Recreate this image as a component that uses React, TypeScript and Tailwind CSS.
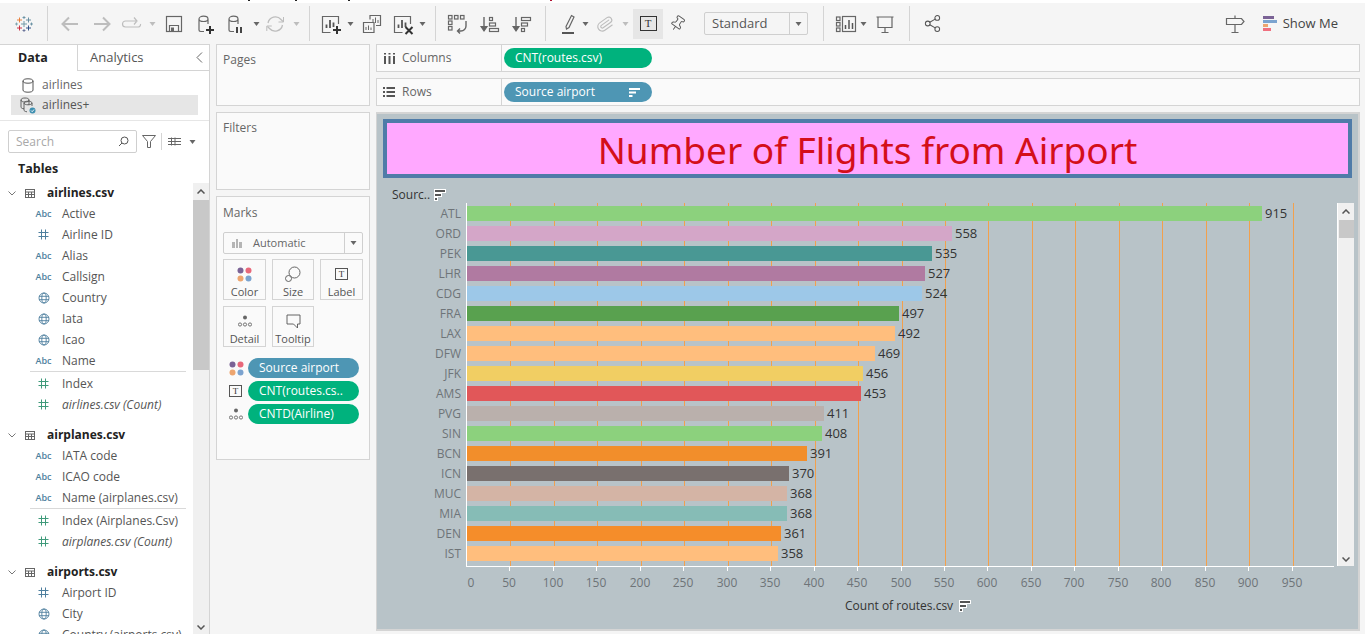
import type { ReactNode } from 'react';
import { Paperclip, Pin, Share2 } from 'lucide-react';

const gray = '#666666';
const faded = '#bdbdbd';

const flights = [
  { code: 'ATL', value: 915, color: '#8cd17d' },
  { code: 'ORD', value: 558, color: '#d4a6c8' },
  { code: 'PEK', value: 535, color: '#499894' },
  { code: 'LHR', value: 527, color: '#b07aa1' },
  { code: 'CDG', value: 524, color: '#9dc8e8' },
  { code: 'FRA', value: 497, color: '#59a14f' },
  { code: 'LAX', value: 492, color: '#ffbe7d' },
  { code: 'DFW', value: 469, color: '#ffbe7d' },
  { code: 'JFK', value: 456, color: '#f1ce63' },
  { code: 'AMS', value: 453, color: '#e15759' },
  { code: 'PVG', value: 411, color: '#bab0ac' },
  { code: 'SIN', value: 408, color: '#8cd17d' },
  { code: 'BCN', value: 391, color: '#f28e2b' },
  { code: 'ICN', value: 370, color: '#79706e' },
  { code: 'MUC', value: 368, color: '#d4b4a5' },
  { code: 'MIA', value: 368, color: '#86bcb6' },
  { code: 'DEN', value: 361, color: '#f58d2a' },
  { code: 'IST', value: 358, color: '#ffbe7d' },
];

const ticks = Array.from({ length: 20 }, (_, i) => i * 50);
const scale = 0.869;

function Icon({ children }: { children: ReactNode }) {
  return (
    <svg width="24" height="24" viewBox="0 0 24 24" fill="none" stroke={gray} strokeWidth="1.2" className="shrink-0">
      {children}
    </svg>
  );
}

function Caret({ className = '', color = '#666666' }: { className?: string; color?: string }) {
  return (
    <svg width="7" height="4" viewBox="0 0 7 4" className={`shrink-0 ${className}`}>
      <path d="M0.5 0H6.5L3.5 4Z" fill={color} />
    </svg>
  );
}

function Sep({ className = '' }: { className?: string }) {
  return <div className={`w-px h-[35px] bg-[#d4d4d4] shrink-0 ${className}`} />;
}

function Logo() {
  const cross = (x: number, y: number, r: number, c: string, w = 1) => (
    <path d={`M${x - r} ${y}H${x + r}M${x} ${y - r}V${y + r}`} stroke={c} strokeWidth={w} />
  );
  return (
    <svg width="24" height="24" viewBox="0 0 24 24" fill="none" className="shrink-0">
      {cross(12, 12, 3, '#7099a6', 1)}
      {cross(7.500, 8, 2.500, '#e8762b', 0.9)}
      {cross(16.500, 8, 2.500, '#5b879b', 0.9)}
      {cross(7.500, 16, 2.500, '#c72035', 0.9)}
      {cross(16.500, 16, 2.500, '#1f447e', 0.9)}
      {cross(12, 5.500, 1.500, '#59879b', 0.8)}
      {cross(12, 18.500, 1.500, '#5b6591', 0.8)}
      {cross(4.500, 12, 1.500, '#7099a6', 0.8)}
      {cross(19.500, 12, 1.500, '#59879b', 0.8)}
    </svg>
  );
}

function Cylinder() {
  return <path d="M6 7c0-1.800 2.200-2.800 4.500-2.800S15 5.200 15 7v5M6 7c0 1.600 2.200 2.500 4.500 2.500S15 8.600 15 7M6 7v11c0 .8.8 1.400 1.600 1.500H11" />;
}

function BarsBox() {
  return (
    <>
      <path d="M11.500 20.500H3.500V4.500H19.500V12" />
      <path d="M7.500 16V12.500M11 16V8M14.500 15V10.500" strokeWidth="1.800" stroke="#555" />
    </>
  );
}

function SortIcon({ dark }: { dark?: boolean }) {
  return (
    <Icon>
      <path d="M6 5V18" strokeWidth="1.400" />
      <path d="M3 14.500L6 19L9 14.500Z" fill={gray} />
      {dark ? (
        <>
          <rect x="11.500" y="5.500" width="9" height="3" />
          <rect x="11.500" y="11" width="6" height="3" />
          <rect x="11.500" y="16.500" width="3" height="3" />
        </>
      ) : (
        <>
          <rect x="11.500" y="5.500" width="3" height="3" />
          <rect x="11.500" y="11" width="6" height="3" />
          <rect x="11.500" y="16.500" width="9" height="3" />
        </>
      )}
    </Icon>
  );
}

function Toolbar() {
  return (
    <div className="flex items-center h-[41px] pl-3 pr-[27px] bg-[#f5f5f5]">
      <Logo />
      <Sep className="ml-[11px]" />
      <div className="ml-[10px] shrink-0">
        <svg width="24" height="24" viewBox="0 0 24 24" fill="none" stroke={faded} strokeWidth="2">
          <path d="M4.500 12H20M11 5.500L4.500 12l6.500 6.500" />
        </svg>
      </div>
      <div className="ml-[8px] shrink-0">
        <svg width="24" height="24" viewBox="0 0 24 24" fill="none" stroke={faded} strokeWidth="2">
          <path d="M4 12H19.500M13 5.500L19.500 12 13 18.500" />
        </svg>
      </div>
      <div className="ml-[5px] shrink-0">
        <svg width="24" height="24" viewBox="0 0 24 24" fill="none" stroke={faded} strokeWidth="1.200">
          <path d="M17 9H6.500a3 3 0 0 0 0 6H19.500a2.500 2.500 0 0 0 2-3M15 5.500L18 9 15 12.500" />
        </svg>
      </div>
      <Caret className="ml-[6px]" color={faded} />
      <div className="ml-[6px] shrink-0">
        <Icon>
          <rect x="4.500" y="4.500" width="15" height="15" />
          <path d="M7.500 19.500V13.500H16.500V19.500" />
          <rect x="9" y="15.500" width="3" height="4" fill={gray} stroke="none" />
        </Icon>
      </div>
      <div className="ml-[7px] shrink-0">
        <Icon>
          <Cylinder />
          <path d="M13 18H21M17 14V22" stroke="#333" strokeWidth="2" />
        </Icon>
      </div>
      <div className="ml-[6px] shrink-0">
        <Icon>
          <Cylinder />
          <path d="M14 15V21M18 15V21" stroke="#444" strokeWidth="2" />
        </Icon>
      </div>
      <Caret className="ml-[6px]" />
      <div className="ml-[3px] shrink-0">
        <svg width="24" height="24" viewBox="0 0 24 24" fill="none" stroke={faded} strokeWidth="1.300">
          <path d="M5 11a7.500 7.500 0 0 1 13-3.500l2 2M19.500 13a7.500 7.500 0 0 1-13 3.500l-2-2" />
          <path d="M20.500 5v5h-5M3.800 19v-5h5" strokeWidth="1" />
        </svg>
      </div>
      <Caret className="ml-[6px]" color={faded} />
      <Sep className="ml-[9px]" />
      <div className="ml-[9px] shrink-0">
        <Icon>
          <BarsBox />
          <path d="M14 18H22M18 14V22" stroke="#333" strokeWidth="2" />
        </Icon>
      </div>
      <Caret className="ml-[4px]" />
      <div className="ml-[6px] shrink-0">
        <Icon>
          <path d="M10 7.500V3.500H20.500V13.500H16" />
          <path d="M13 11V7M15.500 11V5.500M18 11V8" strokeWidth="1" />
          <path d="M3.500 10.500H14V20.500H3.500Z" />
          <path d="M6 18V15M8.500 18V13.500M11 18V15.500" strokeWidth="1" />
        </Icon>
      </div>
      <div className="ml-[7px] shrink-0">
        <Icon>
          <BarsBox />
          <path d="M14.500 15L21.500 22M21.500 15L14.500 22" stroke="#333" strokeWidth="2" />
        </Icon>
      </div>
      <Caret className="ml-[4px]" />
      <Sep className="ml-[9px]" />
      <div className="ml-[9px] shrink-0">
        <Icon>
          <rect x="3.500" y="3.500" width="3.500" height="3.500" />
          <rect x="3.500" y="9" width="3.500" height="3.500" />
          <rect x="3.500" y="14.500" width="3.500" height="3.500" />
          <rect x="9.500" y="3.500" width="3.500" height="3.500" />
          <rect x="15.500" y="3.500" width="3.500" height="3.500" />
          <path d="M21 9V14a5 5 0 0 1-5 5h-3M15 16.500L12.500 19l2.500 2.500" strokeWidth="1.400" />
        </Icon>
      </div>
      <div className="ml-[9px] shrink-0">
        <SortIcon />
      </div>
      <div className="ml-[8px] shrink-0">
        <SortIcon dark />
      </div>
      <Sep className="ml-[11px]" />
      <div className="ml-[10px] shrink-0">
        <Icon>
          <path d="M10 14.500L15.500 3.500L18 5L13 15.500L10.500 17Z" />
          <path d="M6 21H18" stroke="#555" strokeWidth="2" />
        </Icon>
      </div>
      <Caret className="ml-[2px]" />
      <div className="ml-[4px] shrink-0">
        <Paperclip size={18} color={faded} strokeWidth={1.500} className="mx-[3px] rotate-[10deg]" />
      </div>
      <Caret className="ml-[5px]" color={faded} />
      <div className="ml-[4px] w-[30px] h-[30px] bg-[#e6e6e6] flex items-center justify-center shrink-0">
        <div className="w-[17px] h-[15px] border border-[#333] flex items-center justify-center text-[11px] leading-none text-[#333] font-['Liberation_Serif',serif]">
          T
        </div>
      </div>
      <div className="ml-[2px] w-[24px] flex justify-center shrink-0">
        <Pin size={17} color="#555" strokeWidth={1.300} className="rotate-[35deg]" />
      </div>
      <div className="ml-[15px] w-[104px] h-[23px] border border-[#cfcfcf] rounded-[2px] flex items-center shrink-0">
        <div className="flex-1 pl-[7px] text-[13px] text-[#555]">Standard</div>
        <div className="w-[18px] h-full border-l border-[#cfcfcf] flex items-center justify-center">
          <Caret />
        </div>
      </div>
      <Sep className="ml-[15px]" />
      <div className="ml-[10px] shrink-0">
        <Icon>
          <rect x="2.500" y="5" width="3.500" height="3.500" />
          <rect x="2.500" y="10.500" width="3.500" height="3.500" />
          <rect x="2.500" y="16" width="3.500" height="3.500" />
          <rect x="8.500" y="4.500" width="13" height="15" />
          <path d="M11.500 17V13M15 17V8M18.500 17V11" stroke="#555" strokeWidth="1.500" />
        </Icon>
      </div>
      <Caret className="ml-[2px]" />
      <div className="ml-[6px] shrink-0">
        <Icon>
          <path d="M3.500 5H20.500M5 5V15.500H19V5M12 15.500V20M8.500 20.500H15.500" />
        </Icon>
      </div>
      <Sep className="ml-[12px]" />
      <div className="ml-[10px] w-[24px] flex justify-center shrink-0">
        <Share2 size={19} color="#555" strokeWidth={1.300} />
      </div>
      <div className="ml-auto shrink-0">
        <Icon>
          <path d="M12 3.500V6.500M3.500 6.500H18.500L21 9.500L18.500 12.500H3.500ZM12 12.500V20.500M8.500 20.500H15.500" />
        </Icon>
      </div>
      <div className="ml-[16px] w-[14px] flex flex-col gap-px shrink-0">
        <div className="h-[3px] w-[11px] bg-[#7b6396]" />
        <div className="h-[3px] w-[14px] bg-[#7ba3cf]" />
        <div className="h-[3px] w-[5px] bg-[#eda56f]" />
        <div className="h-[3px] w-[8px] bg-[#f0707f]" />
      </div>
      <div className="ml-[6px] text-[13px] text-[#444]">Show Me</div>
    </div>
  );
}

function Globe() {
  return (
    <svg width="12" height="12" viewBox="0 0 12 12" fill="none" stroke="#4e7f9e" strokeWidth="0.900">
      <circle cx="6" cy="6" r="5" />
      <ellipse cx="6" cy="6" rx="2.200" ry="5" />
      <path d="M1 4.300H11M1 7.700H11" />
    </svg>
  );
}

function Hash({ color }: { color: string }) {
  return (
    <svg width="11" height="11" viewBox="0 0 11 11" fill="none" stroke={color} strokeWidth="1">
      <path d="M3.500 0.500V10.500M7.500 0.500V10.500M0.500 3.500H10.500M0.500 7.500H10.500" />
    </svg>
  );
}

function Field({ type, name, italic }: { type: 'abc' | 'dim' | 'geo' | 'mea'; name: string; italic?: boolean }) {
  return (
    <div className="flex items-center h-[21px] whitespace-nowrap">
      <div className="w-[27px] ml-[30px] flex justify-center shrink-0">
        {type === 'abc' && <span className="text-[9px] font-semibold text-[#4e7f9e]">Abc</span>}
        {type === 'dim' && <Hash color="#4e7f9e" />}
        {type === 'geo' && <Globe />}
        {type === 'mea' && <Hash color="#3f9a7a" />}
      </div>
      <span className={`ml-[5px] text-[12px] text-[#555] ${italic ? 'italic' : ''}`}>{name}</span>
    </div>
  );
}

function TableHead({ name }: { name: string }) {
  return (
    <div className="flex items-center h-[20px]">
      <svg width="8" height="5" viewBox="0 0 8 5" fill="none" stroke="#777" strokeWidth="1" className="ml-2">
        <path d="M0.500 0.500L4 4L7.500 0.500" />
      </svg>
      <svg width="11" height="9" viewBox="0 0 11 9" fill="none" stroke="#666" strokeWidth="1" className="ml-[9px]">
        <rect x="0.500" y="0.500" width="9" height="8" />
        <path d="M0.500 3H9.500M0.500 5.500H9.500M3.500 3V8.500M6.500 3V8.500" />
      </svg>
      <span className="ml-[11px] text-[12px] font-bold text-[#222]">{name}</span>
    </div>
  );
}

function FieldSep() {
  return <div className="h-[2px] ml-[30px] w-[156px] border-t border-[#d9d9d9]" />;
}

function DataPanel() {
  return (
    <div className="w-[210px] shrink-0 bg-white border-r border-t border-[#d4d4d4] flex flex-col overflow-hidden">
      <div className="flex h-[26px] shrink-0">
        <div className="w-[78px] pl-[18px] flex items-center font-bold text-[12.500px] text-[#222] border-r border-[#d4d4d4]">Data</div>
        <div className="flex-1 pl-[12px] flex items-center justify-between pr-[6px] text-[#555] border-b border-[#d4d4d4] text-[13px]">
          Analytics
          <svg width="7" height="11" viewBox="0 0 7 11" fill="none" stroke="#666" strokeWidth="1">
            <path d="M6 0.500L1 5.500L6 10.500" />
          </svg>
        </div>
      </div>
      <div className="h-[50px] shrink-0 border-b border-[#e6e6e6] pt-[4px] px-[11px] text-[12px] text-[#666]">
        <div className="flex items-center h-[20px]">
          <svg width="12" height="15" viewBox="0 0 12 15" fill="none" stroke="#555" strokeWidth="1" className="ml-[11px]">
            <path d="M1 3c0-1.500 2-2.200 5-2.200S11 1.500 11 3V12c0 1.500-2 2.200-5 2.200S1 13.500 1 12ZM1 3c0 1.500 2 2.200 5 2.200S11 4.500 11 3" />
          </svg>
          <span className="ml-[8px]">airlines</span>
        </div>
        <div className="flex items-center h-[20px] bg-[#e6e6e6] w-[187px]">
          <svg width="16" height="17" viewBox="0 0 16 17" fill="none" stroke="#555" strokeWidth="0.900" className="ml-[9px] shrink-0">
            <path d="M1 3c0-1.500 2-2 4-2s4 .5 4 2v5M1 3c0 1.500 2 2 4 2s4-.5 4-2M1 3V10c0 1 1 1.600 3 1.800" />
            <path d="M4 6c0-1.200 2-1.800 4-1.800s4 .6 4 1.800v3M4 6c0 1.200 2 1.800 4 1.800s4-.6 4-1.800M4 6v7c0 1 1 1.500 3 1.800" />
            <circle cx="12.500" cy="13.500" r="3" fill="#3e8fb0" stroke="none" />
            <path d="M11 13.500L12.200 14.700L14 12.500" stroke="#fff" strokeWidth="0.900" />
          </svg>
          <span className="ml-[6px] text-[#555]">airlines+</span>
        </div>
      </div>
      <div className="flex items-center h-[23px] mt-[9px] ml-[8px] shrink-0">
        <div className="w-[129px] h-[23px] border border-[#cfcfcf] rounded-[2px] flex items-center justify-between px-[7px] text-[12px] text-[#a8a8a8]">
          Search
          <svg width="11" height="11" viewBox="0 0 11 11" fill="none" stroke="#555" strokeWidth="1">
            <circle cx="6.500" cy="4.500" r="3.500" />
            <path d="M4 7L1 10" />
          </svg>
        </div>
        <svg width="14" height="13" viewBox="0 0 14 13" fill="none" stroke="#666" strokeWidth="1" className="ml-[5px]">
          <path d="M0.500 0.500H13.500L8.500 6.500V12.500H5.500V6.500Z" />
        </svg>
        <div className="w-px h-[17px] bg-[#d4d4d4] ml-[5px]" />
        <svg width="13" height="9" viewBox="0 0 13 9" fill="none" stroke="#666" strokeWidth="1" className="ml-[6px]">
          <path d="M0 1.500H13M0 4.500H13M0 7.500H13M3.500 0.500V8.500M7 0.500V8.500" />
        </svg>
        <Caret className="ml-[8px]" />
      </div>
      <div className="h-[30px] pl-[18px] pt-[3px] flex items-center text-[12.500px] font-bold text-[#222] shrink-0">Tables</div>
      <div className="flex flex-1 min-h-0">
        <div className="flex-1 overflow-hidden">
          <TableHead name="airlines.csv" />
          <Field type="abc" name="Active" />
          <Field type="dim" name="Airline ID" />
          <Field type="abc" name="Alias" />
          <Field type="abc" name="Callsign" />
          <Field type="geo" name="Country" />
          <Field type="geo" name="Iata" />
          <Field type="geo" name="Icao" />
          <Field type="abc" name="Name" />
          <FieldSep />
          <Field type="mea" name="Index" />
          <Field type="mea" name="airlines.csv (Count)" italic />
          <div className="h-[10px]" />
          <TableHead name="airplanes.csv" />
          <Field type="abc" name="IATA code" />
          <Field type="abc" name="ICAO code" />
          <Field type="abc" name="Name (airplanes.csv)" />
          <FieldSep />
          <Field type="mea" name="Index (Airplanes.Csv)" />
          <Field type="mea" name="airplanes.csv (Count)" italic />
          <div className="h-[10px]" />
          <TableHead name="airports.csv" />
          <Field type="dim" name="Airport ID" />
          <Field type="geo" name="City" />
          <Field type="geo" name="Country (airports.csv)" />
        </div>
        <div className="w-[16px] shrink-0 bg-[#f0f0f0] flex flex-col items-center">
          <div className="h-[17px] flex items-center">
            <svg width="8" height="5" viewBox="0 0 8 5" fill="none" stroke="#555" strokeWidth="1.500">
              <path d="M0.500 4.500L4 1L7.500 4.500" />
            </svg>
          </div>
          <div className="h-[170px] w-full bg-[#c8c8c8]" />
          <div className="flex-1" />
          <div className="h-[14px] flex items-center">
            <svg width="8" height="5" viewBox="0 0 8 5" fill="none" stroke="#555" strokeWidth="1.500">
              <path d="M0.500 0.500L4 4L7.500 0.500" />
            </svg>
          </div>
        </div>
      </div>
    </div>
  );
}

function Dots() {
  return (
    <svg width="15" height="15" viewBox="0 0 15 15">
      <circle cx="3.500" cy="3.500" r="3" fill="#7b6396" />
      <circle cx="11.500" cy="3.500" r="3" fill="#e8687a" />
      <circle cx="3.500" cy="11.500" r="3" fill="#eda56f" />
      <circle cx="11.500" cy="11.500" r="3" fill="#7ba3cf" />
    </svg>
  );
}

function DetailDots() {
  return (
    <svg width="14" height="12" viewBox="0 0 14 12" fill="none" stroke="#555" strokeWidth="0.800">
      <circle cx="7" cy="2.500" r="2" fill="#666" stroke="none" />
      <circle cx="2" cy="9.500" r="1.600" />
      <circle cx="7" cy="9.500" r="1.600" />
      <circle cx="12" cy="9.500" r="1.600" />
    </svg>
  );
}

function TBox() {
  return (
    <div className="w-[13px] h-[12px] border border-[#555] flex items-center justify-center text-[9px] leading-none text-[#333] font-['Liberation_Serif',serif]">
      T
    </div>
  );
}

function MarkButton({ label, icon }: { label: string; icon: ReactNode }) {
  return (
    <div className="h-[41px] border border-[#d4d4d4] flex flex-col items-center pt-[5px] text-[11px] leading-none text-[#555] whitespace-nowrap">
      <div className="h-[18px] flex items-center">{icon}</div>
      <div className="mt-[3px]">{label}</div>
    </div>
  );
}

function ShelfCard({ title, className }: { title: string; className: string }) {
  return (
    <div className={`bg-[#fafafa] border border-[#d4d4d4] pl-[6px] pt-[6px] text-[12px] text-[#666] ${className}`}>{title}</div>
  );
}

function MarkPill({ icon, label, color }: { icon: ReactNode; label: string; color: string }) {
  return (
    <div className="flex items-center h-[20px]">
      <div className="w-[25px] pl-[6px] flex items-center">{icon}</div>
      <div className={`w-[111px] h-[20px] rounded-full pl-[11px] text-[12px] leading-[20px] text-white whitespace-nowrap ${color}`}>{label}</div>
    </div>
  );
}

function CardsColumn() {
  return (
    <div className="w-[154px] shrink-0 ml-[6px] flex flex-col gap-[6px]">
      <ShelfCard title="Pages" className="h-[62px]" />
      <ShelfCard title="Filters" className="h-[78px]" />
      <div className="h-[264px] bg-[#fafafa] border border-[#d4d4d4] px-[6px] pt-[8px]">
        <div className="text-[12px] text-[#666] leading-[16px]">Marks</div>
        <div className="mt-[11px] h-[22px] border border-[#cfcfcf] rounded-[2px] flex items-center">
          <div className="flex-1 flex items-center pl-[8px] text-[11px] text-[#666]">
            <svg width="10" height="10" viewBox="0 0 10 10" className="mr-[11px]">
              <path d="M0 4H3V10H0ZM4 1H6V10H4ZM7 4H10V10H7Z" fill="#b5b5b5" />
            </svg>
            Automatic
          </div>
          <div className="w-[18px] h-full border-l border-[#cfcfcf] flex items-center justify-center">
            <Caret />
          </div>
        </div>
        <div className="mt-[5px] grid grid-cols-[43px_42px_43px] gap-x-[6px] gap-y-[6px]">
          <MarkButton label="Color" icon={<Dots />} />
          <MarkButton
            label="Size"
            icon={
              <svg width="16" height="16" viewBox="0 0 16 16" fill="none" stroke="#555" strokeWidth="0.900">
                <circle cx="9.500" cy="6.500" r="5.500" />
                <circle cx="3.500" cy="12.500" r="3" fill="#fafafa" />
              </svg>
            }
          />
          <MarkButton label="Label" icon={<TBox />} />
          <MarkButton label="Detail" icon={<DetailDots />} />
          <MarkButton
            label="Tooltip"
            icon={
              <svg width="15" height="15" viewBox="0 0 15 15" fill="none" stroke="#555" strokeWidth="0.900">
                <path d="M1 1H14V10H11.500V14L7.500 10H1Z" />
              </svg>
            }
          />
        </div>
        <div className="mt-[11px] flex flex-col gap-[3px]">
          <MarkPill icon={<Dots />} label="Source airport" color="bg-[#4e96b4]" />
          <MarkPill icon={<TBox />} label="CNT(routes.cs.." color="bg-[#00b27d]" />
          <MarkPill icon={<DetailDots />} label="CNTD(Airline)" color="bg-[#00b27d]" />
        </div>
      </div>
    </div>
  );
}

function Shelf({ label, icon, pill }: { label: string; icon: ReactNode; pill: ReactNode }) {
  return (
    <div className="h-[28px] bg-[#fafafa] border border-[#d4d4d4] flex items-center">
      <div className="w-[125px] h-full flex items-center border-r border-[#d4d4d4] pl-[6px] text-[12px] text-[#666]">
        <div className="w-[12px] flex justify-center">{icon}</div>
        <span className="ml-[7px]">{label}</span>
      </div>
      <div className="ml-[2px]">{pill}</div>
    </div>
  );
}

function SmallSort() {
  return (
    <svg width="12" height="12" viewBox="0 0 12 12">
      <rect x="0" y="0" width="12" height="4" fill="#fff" />
      <rect x="1" y="1" width="10" height="2" fill="#555" />
      <rect x="0" y="4" width="8" height="4" fill="#fff" />
      <rect x="1" y="5" width="6" height="2" fill="#555" />
      <rect x="0" y="8" width="4" height="4" fill="#fff" />
      <rect x="1" y="9" width="2" height="2" fill="#555" />
    </svg>
  );
}

function Chart() {
  return (
    <div className="flex-1 min-h-0 bg-[#b8c3c8] border-2 border-[#d4d4d4] border-l pl-[6px] pr-[6px] pt-[5px]">
      <div className="h-[59px] pt-[2px] bg-[#ffa8ff] border-4 border-[#4f7ba8] flex items-center justify-center text-[37px] leading-none text-[#d40f1a] font-['Noto_Sans',sans-serif]">
        Number of Flights from Airport
      </div>
      <div className="h-[25px] pt-[9px] flex items-center pl-[9px] text-[12px] text-[#333]">
        Sourc..
        <span className="ml-[4px]">
          <SmallSort />
        </span>
      </div>
      <div className="flex">
        <div className="w-[83px] shrink-0 pt-[3px] pr-[5px]">
          {flights.map((f) => (
            <div key={f.code} className="h-[20px] text-right text-[12px] leading-[15px] text-[#6e7478]">
              {f.code}
            </div>
          ))}
        </div>
        <div className="w-[868px] shrink-0">
          <div className="relative h-[364px] border-l border-b border-white pt-[3px]">
            {ticks.slice(1).map((t) => (
              <div key={t} className="absolute top-0 bottom-0 w-px bg-[#f2a04c]" style={{ left: Math.round(t * scale) }} />
            ))}
            {flights.map((f) => (
              <div key={f.code} className="relative h-[20px] flex items-start">
                <div className="h-[15px] shrink-0" style={{ width: Math.round(f.value * scale), backgroundColor: f.color }} />
                <span className="ml-[3px] text-[13px] leading-[15px] text-[#333]">{f.value}</span>
              </div>
            ))}
          </div>
          <div className="relative h-[27px]">
            {ticks.map((t) => (
              <div key={t} className="absolute top-0 flex flex-col items-center w-[40px] -ml-[20px]" style={{ left: Math.round(t * scale) + (t === 0 ? 5 : 0) }}>
                {t > 0 && <div className="w-px h-[4px] bg-white" />}
                {t === 0 && <div className="h-[4px]" />}
                <span className="mt-[4px] text-[12px] leading-[16px] text-[#6e7478]">{t}</span>
              </div>
            ))}
          </div>
          <div className="h-[24px] flex items-center pl-[379px] text-[12px] text-[#333]">
            Count of routes.csv
            <span className="ml-[6px]">
              <SmallSort />
            </span>
          </div>
        </div>
        <div className="w-[17px] h-[363px] ml-[3px] shrink-0 bg-[#f0f0f0] flex flex-col items-center border-l border-white">
          <div className="h-[17px] flex items-center">
            <svg width="8" height="5" viewBox="0 0 8 5" fill="none" stroke="#555" strokeWidth="1.500">
              <path d="M0.500 4.500L4 1L7.500 4.500" />
            </svg>
          </div>
          <div className="h-[18px] w-[15px] bg-[#c8c8c8]" />
          <div className="flex-1" />
          <div className="h-[14px] flex items-center">
            <svg width="8" height="5" viewBox="0 0 8 5" fill="none" stroke="#555" strokeWidth="1.500">
              <path d="M0.500 0.500L4 4L7.500 0.500" />
            </svg>
          </div>
        </div>
      </div>
    </div>
  );
}

export default function App() {
  return (
    <div className="w-[1365px] h-[634px] overflow-hidden bg-[#f5f5f5] flex flex-col font-['Open_Sans',sans-serif]">
      <div className="h-[3px] bg-white shrink-0 flex">
        <div className="ml-[248px] w-[2px] h-px bg-[#222]" />
        <div className="ml-[45px] w-[2px] h-px bg-[#222]" />
        <div className="ml-[51px] w-[2px] h-px bg-[#222]" />
        <div className="ml-[200px] w-[2px] h-px bg-[#b01030]" />
      </div>
      <Toolbar />
      <div className="flex flex-1 min-h-0">
        <DataPanel />
        <CardsColumn />
        <div className="w-[984px] ml-[6px] flex flex-col gap-[6px] pb-[3px]">
          <Shelf
            label="Columns"
            icon={
              <svg width="11" height="11" viewBox="0 0 11 11" fill="#555">
                <path d="M0 3H2V11H0ZM4.500 3H6.500V11H4.500ZM9 3H11V11H9ZM0 0H2V1.500H0ZM4.500 0H6.500V1.500H4.500ZM9 0H11V1.500H9Z" />
              </svg>
            }
            pill={
              <div className="w-[148px] h-[20px] rounded-full bg-[#00b27d] pl-[11px] text-[12px] leading-[20px] text-white">CNT(routes.csv)</div>
            }
          />
          <Shelf
            label="Rows"
            icon={
              <svg width="12" height="10" viewBox="0 0 12 10" fill="#555">
                <path d="M0 0H2V2H0ZM3.500 0H12V2H3.500ZM0 4H2V6H0ZM3.500 4H12V6H3.500ZM0 8H2V10H0ZM3.500 8H12V10H3.500Z" />
              </svg>
            }
            pill={
              <div className="w-[148px] h-[20px] rounded-full bg-[#4e96b4] pl-[11px] pr-[12px] text-[12px] leading-[20px] text-white flex items-center justify-between">
                Source airport
                <svg width="11" height="9" viewBox="0 0 11 9" fill="#fff">
                  <path d="M0 0H11V2H0ZM0 3.500H7V5.500H0ZM0 7H3.500V9H0Z" />
                </svg>
              </div>
            }
          />
          <Chart />
        </div>
      </div>
    </div>
  );
}
